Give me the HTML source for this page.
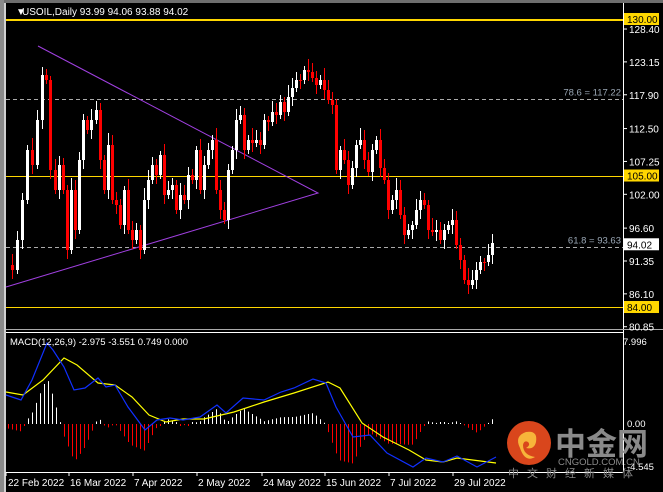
<!DOCTYPE html><html><head><meta charset="utf-8"><style>
body{margin:0;background:#000;width:663px;height:492px;overflow:hidden;font-family:"Liberation Sans",sans-serif}
svg{display:block}
</style></head><body>
<svg id="s" width="663" height="492" xmlns="http://www.w3.org/2000/svg" font-family="Liberation Sans, sans-serif" font-size="10">
<rect width="663" height="492" fill="#000"/>
<rect x="0" y="0" width="663" height="3" fill="#6e6e6e"/>
<rect x="0" y="0" width="4" height="492" fill="#8a8a8a"/>
<rect x="4" y="3" width="2" height="489" fill="#d0d0d0"/>
<line x1="623.5" y1="3" x2="623.5" y2="472" stroke="#fff"/>
<line x1="6" y1="472.5" x2="623" y2="472.5" stroke="#fff"/>
<line x1="6" y1="329.5" x2="663" y2="329.5" stroke="#aaa"/>
<line x1="6" y1="332.5" x2="623" y2="332.5" stroke="#fff"/>
<g id="main"></g>
<g id="macd"></g>
<text x="16" y="15" fill="#fff" font-size="10">▼</text>
<text x="22" y="15" fill="#fff">USOIL,Daily  93.99 94.06 93.88 94.02</text>
<text x="10" y="345" fill="#fff" font-size="9.5">MACD(12,26,9) -2.975 -3.551 0.749 0.000</text>
<text x="623" y="345" fill="#fff" font-size="9.5"> 7.996</text>
<text x="627" y="427" fill="#fff" font-size="9.5">0.00</text>
<text x="627" y="470" fill="#fff" font-size="9.5">-4.545</text>
<circle cx="529" cy="443" r="22" fill="#d9461c"/>
<path d="M520 448 q-6 -12 6 -16 q12 -2 10 10 q-2 8 -10 6 q5 -3 2 -6 q-4 -2 -5 3 q0 10 12 12 q-10 6 -15 -9z" fill="#f7b43a"/>
<text x="555" y="455" fill="#8a8a8a" font-size="31" font-weight="bold" font-family="Noto Sans CJK SC, sans-serif">中金网</text>
<text x="558" y="465" fill="#8a8a8a" font-size="9.5">CNGOLD.COM.CN</text>
<text x="508" y="477" fill="#8a8a8a" font-size="11" letter-spacing="8" font-family="Noto Sans CJK SC, sans-serif">中文财经新媒体</text>
<g fill="#fff" font-size="10">
<text x="8" y="486">22 Feb 2022</text><text x="70" y="486">16 Mar 2022</text><text x="134" y="486">7 Apr 2022</text><text x="198" y="486">2 May 2022</text><text x="263" y="486">24 May 2022</text><text x="326" y="486">15 Jun 2022</text><text x="390" y="486">7 Jul 2022</text><text x="454" y="486">29 Jul 2022</text>
</g>
<g stroke="#fff"><line x1="6" y1="472" x2="6" y2="476"/><line x1="69" y1="472" x2="69" y2="476"/><line x1="133" y1="472" x2="133" y2="476"/><line x1="197" y1="472" x2="197" y2="476"/><line x1="262" y1="472" x2="262" y2="476"/><line x1="325" y1="472" x2="325" y2="476"/><line x1="389" y1="472" x2="389" y2="476"/><line x1="453" y1="472" x2="453" y2="476"/></g>
<g id="axis" fill="#fff" font-size="10"></g>
</svg>
<script>
var NS="http://www.w3.org/2000/svg";
function el(p,t,a,txt){var e=document.createElementNS(NS,t);for(var k in a)e.setAttribute(k,a[k]);if(txt!=null)e.textContent=txt;p.appendChild(e);return e;}
var m=document.getElementById('main'),ax=document.getElementById('axis'),mc=document.getElementById('macd');
function Y(p){return 19+(130-p)*6.261;}
// horizontal levels
[[130,1],[105,1],[84,1]].forEach(function(l){var y=Math.round(Y(l[0]))+.5;el(m,'line',{x1:6,y1:y,x2:623,y2:y,stroke:'#ffd700'});});
el(m,'line',{x1:6,y1:20.5,x2:623,y2:20.5,stroke:'#ffd700'});
[[117.22,'78.6 = 117.22'],[93.63,'61.8 = 93.63']].forEach(function(l){var y=Math.round(Y(l[0]))+.5;el(m,'line',{x1:6,y1:y,x2:623,y2:y,stroke:'#aaa','stroke-dasharray':'4,3'});el(m,'text',{x:621,y:y-4,fill:'#9aa7b5','text-anchor':'end','font-size':'9.5'},l[1]);});
// triangle
el(m,'polyline',{points:'38,46 318,193 6,287',fill:'none',stroke:'#a040e0'});
// axis labels
[[128.40],[123.15],[117.90],[112.50],[107.25],[102.00],[96.60],[91.35],[86.10],[80.85]].forEach(function(v){var y=Y(v[0]);el(ax,'line',{x1:623,y1:y,x2:627,y2:y,stroke:'#fff'});el(ax,'text',{x:629,y:y+4},v[0].toFixed(2));});
[[130,'#ffd700','#000'],[105,'#ffd700','#000'],[84,'#ffd700','#000'],[94.02,'#fff','#000']].forEach(function(v){var y=Y(v[0]);el(ax,'rect',{x:624,y:y-6,width:35,height:12,fill:v[1]});el(ax,'text',{x:627,y:y+4,fill:v[2]},v[0].toFixed(2));});
// candles
var pts=[[7,265],[12,270],[17,240],[22,200],[27,150],[32,165],[37,120],[42,75],[46,80],[50,170],[55,190],[59,165],[63,190],[67,250],[71,190],[75,230],[79,160],[83,120],[87,130],[91,120],[96,110],[100,160],[104,190],[108,145],[112,200],[116,205],[120,225],[124,190],[128,230],[132,240],[136,230],[140,250],[144,200],[148,180],[152,165],[156,175],[160,155],[164,195],[168,190],[172,185],[176,210],[180,195],[184,200],[188,175],[192,180],[196,150],[200,190],[204,165],[208,150],[212,140],[216,190],[220,210],[224,220],[228,170],[232,150],[236,120],[240,115],[244,150],[248,140],[252,143],[256,140],[260,145],[264,120],[268,122],[272,112],[276,115],[280,102],[284,112],[288,97],[292,88],[296,80],[300,80],[304,70],[308,72],[312,78],[316,85],[320,80],[324,90],[328,100],[332,105],[336,170],[340,150],[344,160],[348,185],[352,168],[356,145],[360,140],[364,160],[368,172],[372,150],[376,140],[380,168],[384,180],[388,210],[392,200],[396,190],[400,215],[404,235],[408,230],[412,225],[416,210],[420,200],[424,205],[428,230],[432,232],[436,230],[440,240],[444,230],[448,225],[452,220],[456,245],[460,260],[464,280],[468,285],[472,280],[476,270],[480,262],[484,262],[488,255],[492,243]];
for(var i=1;i<pts.length;i++){var x=pts[i][0],o=pts[i-1][1],c=pts[i][1];var up=c<o;var col=up?'#fff':'#f00';var t=Math.min(o,c),b=Math.max(o,c);var h=t-4-((i*7)%9),l=b+4+((i*5)%10);
el(m,'line',{x1:x+.5,y1:h,x2:x+.5,y2:l,stroke:col});el(m,'rect',{x:x-1,y:t,width:3,height:Math.max(1,b-t),fill:col});}
// MACD
var blue=[[6,395],[21,400],[32,380],[47,343],[53,350],[64,367],[74,390],[85,388],[98,378],[106,387],[115,385],[128,407],[145,430],[157,420],[170,418],[183,420],[200,417],[217,405],[226,413],[243,398],[264,400],[281,392],[294,388],[313,379],[326,383],[336,407],[353,437],[370,435],[387,453],[413,467],[426,458],[443,462],[457,456],[477,467],[496,457]];
var yel=[[6,392],[23,395],[43,380],[64,358],[77,365],[98,383],[115,385],[132,397],[149,415],[166,422],[183,419],[204,419],[234,412],[264,402],[294,393],[328,382],[340,388],[362,423],[383,437],[409,450],[426,460],[443,462],[457,458],[496,463]];
function interp(a,x){for(var i=1;i<a.length;i++)if(x<=a[i][0]){var t=(x-a[i-1][0])/(a[i][0]-a[i-1][0]);return a[i-1][1]+t*(a[i][1]-a[i-1][1]);}return a[a.length-1][1];}
for(var x=8;x<=494;x+=4){var d=(interp(yel,x)-interp(blue,x))*1.4;if(Math.abs(d)<1)d=d<0?-2:2;var z=424;
if(d>0)el(mc,'line',{x1:x+.5,y1:z-d,x2:x+.5,y2:z,stroke:'#fff'});else el(mc,'line',{x1:x+.5,y1:z,x2:x+.5,y2:z-d,stroke:'#f00'});}
el(mc,'polyline',{points:yel.map(function(p){return p.join(',')}).join(' '),fill:'none',stroke:'#ffff00','stroke-width':1.2});
el(mc,'polyline',{points:blue.map(function(p){return p.join(',')}).join(' '),fill:'none',stroke:'#1030ff','stroke-width':1.2});
</script>
</body></html>
